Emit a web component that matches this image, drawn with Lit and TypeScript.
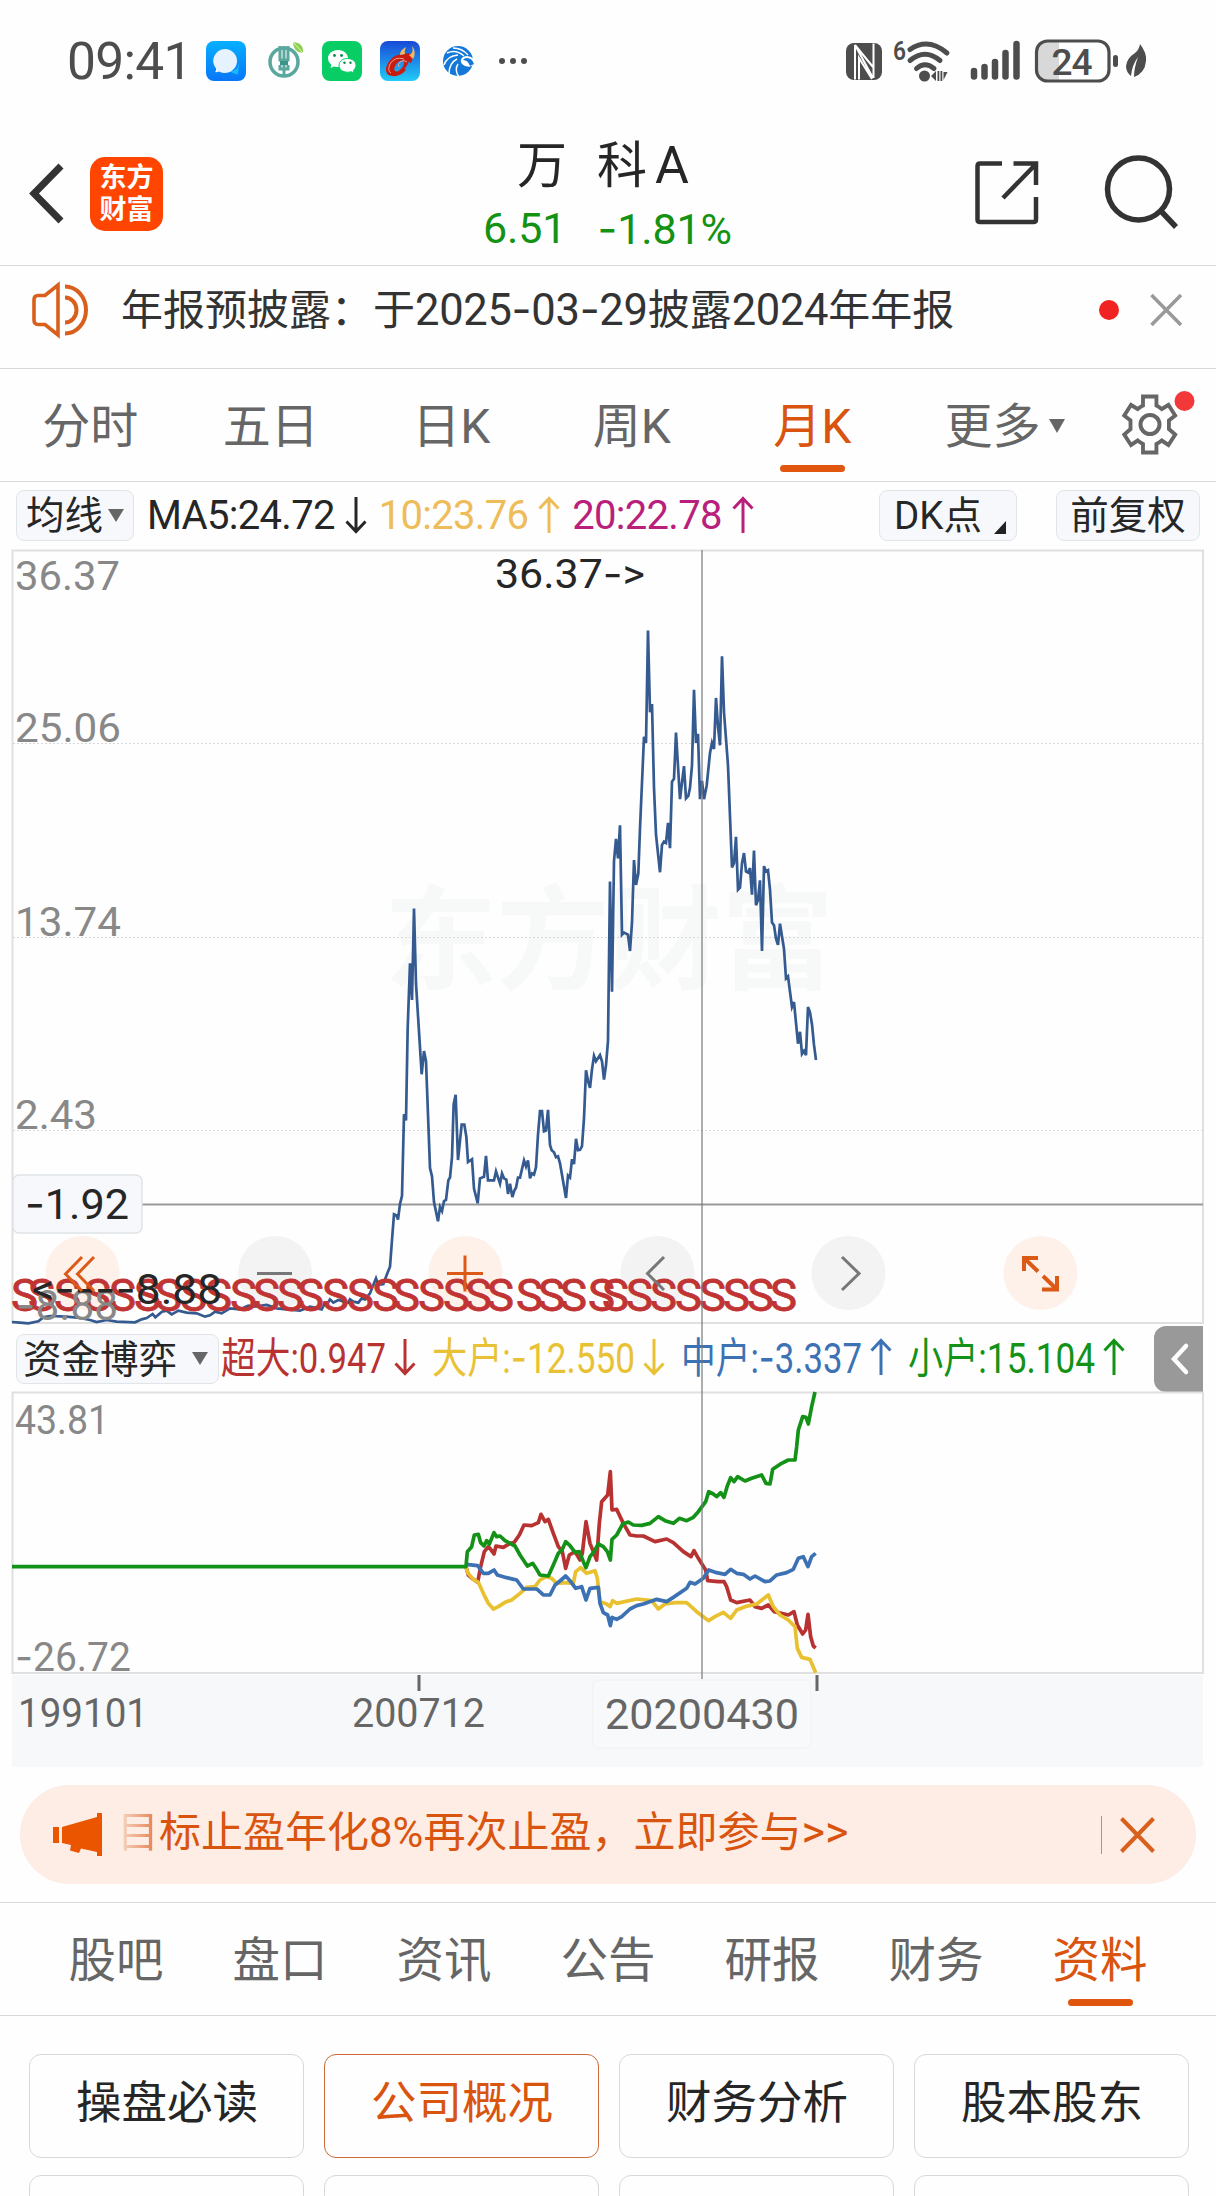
import { LitElement, html, svg, css } from "lit";
import { customElement } from "lit/decorators.js";

const PRICE_EARLY =
  "36,486 60,488 85,490 115,484 130,472 150,468 200,470 240,474 270,480 290,486 320,480 350,485 405,487 425,478 440,474 458,462 466,472 486,455 500,452 515,463 535,452 560,458 590,460 615,470 630,466 645,455 665,460 690,445 720,448 745,437 760,440 800,435 830,445 860,448 900,452 930,440 965,448 975,428 982,432 990,418 1000,428 1015,420 1030,424 1045,428 1050,418 1060,425 1075,428 1085,415 1095,418 1110,400 1120,375 1128,355 1135,375 1150,372 1160,345 1170,320 1176,240";
const PRICE_MAIN =
  "66,1568 72,1505 80,1508 84,1518 90,1480 96,1460 102,1260 108,1275 113,1050 120,890 126,980 132,756 138,940 155,1162 162,1105 168,1130 180,1392 186,1412 192,1475 204,1522 210,1487 216,1497 222,1473 228,1470 235,1422 240,1415 246,1365 251,1235 257,1212 264,1372 275,1285 283,1285 289,1315 294,1377 306,1370 312,1442 323,1478 330,1417 342,1413 348,1362 354,1422 372,1422 378,1400 390,1430 396,1405 402,1417 409,1420 414,1455 420,1430 427,1463 433,1447 438,1440 444,1415 450,1415 462,1373 468,1388 474,1373 480,1417 486,1405 492,1408 498,1390 504,1310 510,1252 516,1252 522,1302 528,1300 534,1249 540,1335 545,1348 552,1353 558,1365 564,1363 570,1380 588,1465 594,1410 600,1415 606,1370 612,1382 618,1320 624,1348 630,1347 636,1338 642,1270 648,1152 654,1178 660,1195 666,1150 672,1117 678,1130 690,1115 696,1130 702,1175 708,1140 714,1080 720,690 726,960 732,640 738,585 744,633 750,552 756,820 762,815 774,820 780,860 786,790 792,637 798,698 805,670 810,560 822,335 828,350 834,75 840,275 846,255 852,460 858,575 870,667 876,600 882,592 888,595 894,546 900,608 906,445 912,438 918,325 930,488 942,407 948,486 955,480 960,460 966,405 972,220 978,350 984,328 990,488 996,443 1002,488 1010,455 1020,375 1026,350 1032,365 1038,240 1044,310 1050,356 1056,138 1062,275 1074,405 1086,655 1092,645 1098,580 1104,710 1110,705 1116,645 1122,620 1128,665 1134,668 1140,657 1146,722 1152,614 1158,748 1164,735 1170,687 1176,860 1182,652 1188,665 1194,662 1200,710 1206,790 1212,797 1218,830 1224,845 1230,793 1242,855 1248,927 1254,922 1266,997 1272,985 1284,1087 1290,1058 1296,1112 1302,1105 1308,1115 1314,997 1320,1010 1326,1040 1332,1090 1338,1127";
const FLOWS: [string, string][] = [
  ["#b83232", "78,560 85,585 100,598 113,607 122,560 133,515 145,500 152,508 162,522 168,498 190,502 210,490 222,488 238,465 252,435 275,437 295,428 303,403 315,425 325,418 340,460 355,500 367,515 377,565 388,525 405,515 420,540 427,520 438,425 450,490 462,520 470,540 478,430 485,365 503,345 511,275 516,390 530,388 550,430 570,465 590,468 610,468 645,485 680,477 700,488 730,515 753,530 762,512 775,535 797,570 803,602 835,605 852,605 860,620 872,660 890,668 930,660 945,680 965,685 985,675 1003,695 1045,705 1062,695 1072,735 1088,762 1097,750 1104,703 1112,770 1120,798 1127,804"],
  ["#e8c030", "78,560 83,578 100,598 115,607 130,640 145,670 160,687 175,680 195,667 215,660 240,640 260,622 285,620 300,600 318,590 335,595 350,610 375,608 400,610 407,575 422,563 440,580 455,575 465,572 472,595 480,665 500,672 510,680 518,662 530,670 590,657 635,662 655,687 675,672 705,668 740,668 770,695 806,722 825,710 850,697 872,715 890,690 915,680 950,672 985,645 1000,680 1020,705 1045,720 1065,740 1072,805 1085,832 1110,838 1127,878"],
  ["#3c72b4", "78,553 113,557 130,580 145,580 162,570 172,585 200,593 230,600 250,627 290,627 310,645 330,645 345,615 360,603 377,588 390,602 407,625 425,620 438,660 450,625 475,622 480,670 490,698 503,705 511,737 516,712 530,718 545,710 570,687 590,677 610,672 650,658 680,665 700,652 740,625 750,607 765,612 790,595 806,570 830,578 855,583 872,568 890,580 910,583 930,597 945,588 975,605 990,603 1010,585 1040,578 1060,568 1075,535 1090,530 1104,560 1115,530 1127,520"],
  ["#149218", "-1284,560 78,560 82,515 95,500 103,465 115,463 122,488 132,498 140,482 148,492 155,475 162,458 170,470 180,468 195,482 210,490 225,498 240,525 262,558 278,550 290,568 300,585 325,588 340,555 355,520 367,508 377,485 390,497 405,517 418,515 430,545 438,563 450,530 462,515 475,492 490,500 502,515 511,540 516,478 530,465 548,432 565,426 580,435 605,436 630,430 655,410 675,422 700,430 718,415 740,422 760,412 775,395 797,365 806,335 820,342 830,350 842,338 852,352 862,318 872,293 882,305 893,290 915,303 935,295 965,285 978,310 990,312 998,268 1025,250 1045,240 1065,240 1070,200 1075,150 1088,110 1098,112 1105,132 1115,80 1125,36"],
];
const SELL_MARKS = [13, 30, 56, 86, 111, 136, 157, 182, 207, 232, 255, 279, 299, 324, 349, 374, 395, 420, 445, 467, 489, 518, 540, 562, 590, 604, 628, 652, 677, 701, 725, 749, 772];

/* Hyphens use the wider dash of a second family. */
const dash = (s: string) =>
  s.split("-").map((p, i) => (i ? html`<span class="hy">-</span>${p}` : html`${p}`));
const sdash = (s: string) =>
  s.split("-").map((p, i) => (i ? svg`<tspan class="hy">-</tspan>${p}` : svg`${p}`));
const label = (x: number, y: number, w: number, s: string, cls = "", size = 40) =>
  svg`<text class=${cls} x=${x} y=${y} font-size=${size} textLength=${w} lengthAdjust="spacingAndGlyphs">${sdash(s)}</text>`;

const arrow = (down: boolean) => html`<svg class="arrow" width="22" height="38" viewBox="0 0 22 38">
  <path d=${down ? "M11 1V35M1.5 25.5L11 35.5L20.500 25.5" : "M11 37V3M1.500 12.500L11 2.500L20.500 12.500"} fill="none" stroke="currentColor" stroke-width="3" /></svg>`;
const legend = (s: string, w: number, down: boolean, cls: string) => html`<span class="leg ${cls}">
  <svg width=${w} height="56" viewBox="0 0 ${w} 56">${label(0, 42, w, s, "", 42)}</svg>${arrow(down)}</span>`;

const appIcons = [
  html`<svg width="40" height="40" viewBox="0 0 40 40"><defs><linearGradient id="a" x2="0" y2="1"><stop stop-color="#06b0ff"/><stop offset="1" stop-color="#0876f8"/></linearGradient></defs><rect width="40" height="40" rx="8" fill="url(#a)"/><path d="M24 30q8 0 9-8l-1 11q-4 1-8-3z" fill="#18b8fc"/><path d="M19 8a12.500 12 0 1 1-1 24q-3-.3-5-1.500q-2 1-4 .5q1.500-1.500 1-3.500A12.500 12 0 0 1 19 8z" fill="#e6f3ff"/></svg>`,
  html`<svg width="40" height="40" viewBox="0 0 40 40"><circle cx="20" cy="21" r="14" fill="none" stroke="#5aa79d" stroke-width="3.500"/><path d="M16 5v14h8V5M20 5v11M16 24v4h8v-4M20 16v19" fill="none" stroke="#5aa79d" stroke-width="3"/><path d="M16 20h8v4h-8z" fill="#3b9488"/><path d="M29 1q11 1 10 11q-10-1-10-11z" fill="#8bd04e"/><path d="M29 1l10 11" stroke="#e6f6c8" stroke-width="1"/></svg>`,
  html`<svg width="40" height="40" viewBox="0 0 40 40"><rect width="40" height="40" rx="8" fill="#08cc64"/><path d="M16 9c6 0 10 4 10 8.500S22 26 16 26q-2 0-4-.6L8.500 27l.8-3.300C7.500 22 6 20 6 17.500C6 13 10 9 16 9z" fill="#fff"/><path d="M25.500 17.500c5 0 8.500 3 8.500 6.800c0 2-1 3.700-2.500 5l.6 2.700-3-1.300q-1.700.5-3.600.5c-5 0-8.500-3-8.500-6.900s3.500-6.800 8.500-6.800z" fill="#fff" stroke="#08cc64" stroke-width="1"/><circle cx="12.500" cy="14.500" r="1.400" fill="#078c45"/><circle cx="19.500" cy="14.500" r="1.400" fill="#078c45"/><circle cx="22.500" cy="21.800" r="1.200" fill="#078c45"/><circle cx="28.500" cy="21.800" r="1.200" fill="#078c45"/></svg>`,
  html`<svg width="40" height="40" viewBox="0 0 40 40"><defs><linearGradient id="b" x2="0" y2="1"><stop stop-color="#1848d8"/><stop offset="1" stop-color="#22ccf8"/></linearGradient></defs><rect width="40" height="40" rx="8" fill="url(#b)"/><path d="M22 14q5-3 9-1q3 3 0 9l-4-2q-5-3-10 2q-4 5-2 8q4 2 9-3l2 2q-6 7-14 6q-7-1-6-8q2-8 9-12q4-2 7-1z" fill="#c81c10"/><path d="M26 15q5 5 0 11q-4 5-9 5q8-5 7-11z" fill="#c81c10"/><path d="M24 18q-9-3-14 5q-3 7 1 9M27 21q-3-3-7 0q-3 3-1 5" fill="none" stroke="#f0a090" stroke-width="1"/><path d="M20 14q0-5 6-8q-2 4-1 7zM29 14q5-1 3-9q5 6 1 13z" fill="#f4b860"/></svg>`,
  html`<svg width="40" height="40" viewBox="0 0 40 40"><circle cx="20" cy="20" r="15" fill="#1478d8"/><path d="M36 18q-6-5-11-2q-4 3-1 7q4 4 10 2l3-3z" fill="#fff"/><path d="M36 23q-2-6-7-6q-3 0-4 2q5 0 7 6z" fill="#1478d8"/><path d="M9 12q9-4 17 3M6 24q3-9 14-10M11 33q0-11 8-15M21 36q-5-7-1-13M15 7q9 0 15 7" fill="none" stroke="#fff" stroke-width="1.400"/></svg>`,
  html`<svg width="40" height="40" viewBox="0 0 40 40" fill="#4d4d4d"><circle cx="6" cy="20" r="3"/><circle cx="17" cy="20" r="3"/><circle cx="28" cy="20" r="3"/></svg>`,
];

const PAD_X = [82.5, 275, 465.5, 657.5, 848.5, 1040.5];
const padCircles = () =>
  PAD_X.map((x, i) => svg`<circle class=${i % 5 === 0 || i === 2 ? "wbg" : "cbg"} cx=${x} cy="1273" r="37"/>`);

@customElement("app-root")
export class AppRoot extends LitElement {
  static styles = css`
    :host { display: block; width: 1216px; height: 2196px; overflow: hidden; background: #fefefe; color: #262626;
      font-family: Roboto, "Noto Sans CJK SC", sans-serif; }
    * { box-sizing: border-box; }
    svg { display: block; flex: none; overflow: visible; }
    .hy { font-family: Inter, sans-serif; }
    .status { height: 122px; padding: 0 70px 0 67px; display: flex; align-items: center; color: #4d4d4d; }
    .time { width: 139px; font-size: 51.500px; line-height: 60px; letter-spacing: -.7px; padding-top: 2px; }
    .apps { display: flex; gap: 18px; }
    .sys { margin-left: auto; display: flex; align-items: center; }
    .wifi { margin-left: 11px; } .signal { margin-left: 16px; } .battery { margin-left: 14px; } .leaf { margin-left: 7px; }
    .head { height: 144px; border-bottom: 1px solid #d5d9d9; display: grid; grid-template-columns: 29px 34px 27px 73px 1fr 63px 67px 72px 39px; align-items: center; }
    .back { grid-column: 2; } .share { grid-column: 6; } .search { grid-column: 8; }
    .brand { grid-column: 4; height: 74px; border-radius: 15px; background: #ff4500; color: #fff; font: 700 27px/32px "Noto Sans CJK SC", sans-serif; text-align: center; padding-top: 3px; }
    .title { grid-column: 5; padding-left: 320px; align-self: start; display: flex; flex-direction: column; }
    .name { font-size: 50px; line-height: 60px; padding: 14px 0 0 34px; display: flex; white-space: nowrap; }
    .name span { margin-right: 30px; }
    .name .k { margin-right: 8px; }
    .name .a { margin: 0; font-size: 52px; }
    .quote { font-size: 43px; line-height: 50px; color: #149214; display: flex; gap: 31px; letter-spacing: -.100px; margin-top: 7px; }
    .notice { height: 103px; border-bottom: 1px solid #d5d9d9; display: flex; align-items: center; padding: 0 33px 14px 32px; color: #333; font-size: 42px; }
    .notice p { margin: 0 0 0 34px; line-height: 60px; white-space: nowrap; flex: 1; }
    .notice .d { font-size: 43.500px; letter-spacing: -.300px; }
    .pip { width: 20px; height: 20px; border-radius: 50%; background: #f02222; }
    .x { margin-left: 31px; }
    .tabs { height: 113px; border-bottom: 1px solid #d5d9d9; display: grid; grid-template-columns: repeat(5, 180.500px) 207.500px 1fr; font-size: 48px; line-height: 56px; color: #666; }
    .tab { display: flex; flex-direction: column; align-items: center; padding-top: 30px; }
    .tab.more { flex-direction: row; align-items: flex-start; padding-left: 42px; gap: 8px; }
    .more svg { margin-top: 20px; }
    .tab.on { color: #d9540f; }
    .on::after { content: ""; width: 65px; height: 7px; border-radius: 4px; background: #e0560e; margin-top: 10px; }
    .gear { margin-top: 22px; margin-left: 8px; }
    .ma { height: 68px; display: flex; align-items: flex-start; padding: 8px 16px 0; font-size: 40px; line-height: 48px; white-space: nowrap; }
    .btn { height: 51px; border: 1.500px solid #e2e5e8; border-radius: 8px; background: #f6f8fb; display: flex; align-items: center; font-size: 38.500px; flex: none; }
    .btn.avg { width: 118px; padding-left: 9px; gap: 5px; }
    .btn.dk { width: 138px; padding-left: 14px; gap: 12px; margin-left: auto; }
    .btn.dk svg { margin-top: 24px; }
    .btn.fq { width: 144px; justify-content: center; margin-left: 39px; }
    .avgs { display: flex; margin-left: 13px; padding-top: 2px; letter-spacing: -.700px; }
    .avgs > span { display: flex; align-items: center; gap: 10px; }
    .avgs svg { margin-top: -3px; }
    .c10 { color: #eebc58; margin-left: 12px; } .c20 { color: #b8207c; margin-left: 12px; }
    .chart { position: relative; padding-left: 12px; width: 1216px; }
    .axislab { fill: #888; }
    .dark { fill: #262626; }
    .wm { fill: #f7f8f8; font: 700 113px "Noto Sans CJK SC", sans-serif; }
    .grid { stroke: #d8d8d8; stroke-width: 1; stroke-dasharray: 2 2; }
    .frame { fill: none; stroke: #e0e0e0; stroke-width: 2; }
    .price { fill: none; stroke: #345a90; stroke-width: 2.700; vector-effect: non-scaling-stroke; }
    .flow { fill: none; stroke-width: 3.700; vector-effect: non-scaling-stroke; stroke-linejoin: round; }
    .sell { fill: #c03434; stroke: #c03434; stroke-width: .8; }
    .warm { stroke: #dc5a18; } .cool { stroke: #777; }
    .warm, .cool { fill: none; stroke-width: 3; }
    .thick { stroke-width: 4; }
    .wbg { fill: #fef1ea; } .cbg { fill: #f3f3f3; }
    .legend { display: flex; height: 67px; align-items: center; }
    .btn.cap { width: 203px; height: 50px; margin-left: 4px; padding: 0 0 5px 6px; gap: 15px; font-size: 38.500px; }
    .cap svg { margin-top: 5px; }
    .leg { display: flex; align-items: center; gap: 8px; }
    .leg text { fill: currentColor; }
    .leg .arrow { margin-top: -4px; }
    .r { color: #b83232; margin-left: 2px; } .y { color: #e8c234; margin-left: 16px; } .b { color: #3c72b4; margin-left: 16px; } .g { color: #149218; margin-left: 16px; }
    .drawer { margin-left: auto; margin-right: 13px; width: 49px; height: 66px; background: #999; border-radius: 12px 0 0 12px; display: grid; place-items: center; }
    .axis { width: 1191px; height: 92px; background: #f7f8fa; margin-top: 1px; }
    .axis text { fill: #666; }
    .tip { fill: #f8f9fb; stroke: #f0f1f3; }
    .cross { position: absolute; left: 701px; top: 0; width: 2px; height: 1129px; background: rgba(120,120,120,.6); }
    .promo { margin: 18px 20px 18px; height: 99px; border-radius: 50px; background: #fdede4; color: #d9540f; display: flex; align-items: center; padding: 0 41px 0 33px; font-size: 42px; line-height: 60px; }
    .promo p { margin: 0 0 4px 14px; flex: 1; white-space: nowrap; }
    .gt { font-size: 45px; }
    .fade { background: linear-gradient(90deg, rgba(217,84,15,.1), rgba(217,84,15,.75)); -webkit-background-clip: text; background-clip: text; color: transparent; }
    .bar { width: 1.500px; height: 38px; background: #c98a64; margin-right: 18px; }
    .nav { height: 114px; border: solid #d5d9d9; border-width: 1px 0; padding: 0 34px; display: grid; grid-template-columns: repeat(7, 164px); font-size: 47.500px; line-height: 56px; color: #666; }
    .nav .tab { padding-top: 30px; }
    .cards { padding: 38px 27px 0 29px; display: grid; grid-template-columns: repeat(4, 275px); gap: 17px 20px; font-size: 45.500px; line-height: 60px; }
    .card { height: 104px; border: 1.500px solid #d5d9d9; border-radius: 12px; text-align: center; padding: 19px 0 0 1px; }
    .card.sel { border-color: #cd6a38; color: #d9540f; }
  `;

  render() {
    const tri = (w: number, h: number) => html`<svg width=${w} height=${h} viewBox="0 0 10 10" preserveAspectRatio="none"><path d="M0 0h10L5 10z" fill="#666"/></svg>`;
    return html`
      <div class="status">
        <div class="time">09:41</div>
        <div class="apps">${appIcons}</div>
        <div class="sys">
          <svg width="36" height="37" viewBox="0 0 36 37"><rect width="36" height="37" rx="8" fill="#4d4d4d"/><path d="M9 36.500V2L27 35M27.500 .5V35M13 36.500V15L26 36M9 2L27 24" fill="none" stroke="#fff" stroke-width="2"/></svg>
          <svg class="wifi" width="61" height="42" viewBox="0 0 61 42"><text x="0" y="20" font-size="26" font-weight="600" textLength="13" lengthAdjust="spacingAndGlyphs" fill="#4d4d4d">6</text><path d="M17 9.500Q35-3 54 13M17 20.500Q32 8 47 20.500M23.500 28.500Q32 21 41 28.500" fill="none" stroke="#4d4d4d" stroke-width="5" stroke-linecap="round"/><circle cx="31.500" cy="36" r="5.500" fill="#4d4d4d"/><path d="M38 36l5-5v10zM44.500 31h1.800v10h-1.800zM47.500 31h1.800v10h-1.800zM50.500 32h4l-4 8z" fill="#4d4d4d"/></svg>
          <svg class="signal" width="51" height="42" viewBox="0 0 51 42"><path d="M4 31V36.500M14.500 27V36.500M25 22V36.500M35.500 13V36.500M46.500 4V36.500" stroke="#4d4d4d" stroke-width="6.500" stroke-linecap="round"/></svg>
          <svg class="battery" width="84" height="44" viewBox="0 0 84 44"><path d="M11 3H24V41H11Q2 41 2 32V12Q2 3 11 3z" fill="#d8d8d8"/><rect x="1.500" y="2" width="72.500" height="40" rx="11" fill="none" stroke="#4d4d4d" stroke-width="3.200"/><rect x="78" y="16" width="5" height="12" rx="2.500" fill="#4d4d4d"/><text x="16.500" y="35.500" font-size="37" font-weight="500" textLength="41" fill="#4d4d4d">24</text></svg>
          <svg class="leaf" width="20" height="34" viewBox="0 0 20 34"><path d="M14 0Q21 9 20 17Q19 29 8 33Q8 24 12 13Q6 21 5 32Q0 28 0 22Q1 14 9 9Q13 6 14 0z" fill="#4d4d4d"/></svg>
        </div>
      </div>
      <header class="head">
        <svg class="back" width="34" height="60" viewBox="0 0 34 60"><path d="M32 2L5 29.500L32 57" fill="none" stroke="#333" stroke-width="7"/></svg>
        <div class="brand">东方<br>财富</div>
        <div class="title">
          <div class="name"><span>万</span><span class="k">科</span><span class="a">A</span></div>
          <div class="quote"><span>6.51</span><span>${dash("-1.81%")}</span></div>
        </div>
        <svg class="share" width="64" height="64" viewBox="0 0 64 64"><path d="M27 1.500H5Q2.500 1.500 2.500 4V57.500Q2.500 60 5 60H58.500Q61 60 61 57.500V35M38.500 1.500H61V23M61 2L28 36" fill="none" stroke="#333" stroke-width="4.500"/></svg>
        <svg class="search" width="74" height="76" viewBox="0 0 74 76"><circle cx="33.500" cy="33" r="31" fill="none" stroke="#333" stroke-width="5.500"/><path d="M55 54L71 71" stroke="#333" stroke-width="5.500"/></svg>
      </header>
      <div class="notice">
        <svg width="55" height="54" viewBox="0 0 55 54"><path d="M26 2V52L13 41.500H6Q2 41.500 2 37V17Q2 12.500 6 12.500H13Z" fill="none" stroke="#d9601c" stroke-width="3.600"/><path d="M33 3.500A21 23.500 0 0 1 33 50.500M33 14.500A11.500 12.500 0 0 1 33 39.500" fill="none" stroke="#d9601c" stroke-width="4"/></svg>
        <p>年报预披露：于<span class="d">${dash("2025-03-29")}</span>披露<span class="d">2024</span>年年报</p>
        <i class="pip"></i>
        <svg class="x" width="33" height="34" viewBox="0 0 33 34"><path d="M1.500 2L31 32M31 2L1.500 32" stroke="#999" stroke-width="3.500"/></svg>
      </div>
      <nav class="tabs">
        ${["分时", "五日", "日K", "周K", "月K"].map((t) => html`<div class="tab ${t === "月K" ? "on" : ""}">${t}</div>`)}
        <div class="tab more">更多${tri(16, 14)}</div>
        <svg class="gear" width="68" height="72" viewBox="0 0 68 72"><g fill="none" stroke="#666" stroke-width="4"><path d="M25 16.500V7.500H39V16.500Q42 18 44.500 20L51.500 16L58.500 26.500L52 31.500V40L58.500 45.500L51.500 56L44.500 51.500Q42 53.500 39 55V63.500H25V55Q22 53.500 19.500 51.500L12.500 56L5.500 45.500L12 40V31.500L5.500 26.500L12.500 16L19.500 20Q22 18 25 16.500z" transform="translate(1 -2) scale(.96 1)"/><circle cx="32" cy="33.500" r="9.500"/></g><circle cx="66.500" cy="10" r="10" fill="#f23838"/></svg>
      </nav>
      <div class="ma">
        <div class="btn avg">均线${tri(16, 13)}</div>
        <div class="avgs">
          <span>MA5:24.72${arrow(true)}</span><span class="c10">10:23.76${arrow(false)}</span><span class="c20">20:22.78${arrow(false)}</span>
        </div>
        <div class="btn dk">DK点<svg width="12" height="13" viewBox="0 0 12 13"><path d="M12 0V13H0z" fill="#222"/></svg></div>
        <div class="btn fq">前复权</div>
      </div>
      <section class="chart">
        <svg width="1191" height="775" viewBox="12 550 1191 775">
          <text class="wm" x="384" y="980" textLength="450">东方财富</text>
          <rect class="frame" x="12.500" y="550.500" width="1190.500" height="772.500"/>
          <path class="grid" d="M13 743.500H1202M13 937.500H1202M13 1130.500H1202"/>
          <path d="M13 1204.500H1203" stroke="#999" stroke-width="2"/>
          ${padCircles()}
          <polyline class="price" points=${PRICE_EARLY} transform="translate(0 1160) scale(.33333)"/>
          <polyline class="price" points=${PRICE_MAIN} transform="translate(370 600) scale(.33333 .40816)"/>
          ${label(15, 590, 105, "36.37", "axislab")}${label(15, 742, 106, "25.06", "axislab")}${label(15, 936, 106, "13.74", "axislab")}${label(15, 1129, 82, "2.43", "axislab")}
          ${label(495, 588, 150, "36.37->", "dark", 40)}
          ${SELL_MARKS.map((x) => svg`<text class="sell" x=${x - 2} y="1310.500" font-size="43.500" textLength="27" lengthAdjust="spacingAndGlyphs">S</text>`)}
          ${label(16, 1320, 102, "-8.88", "axislab", 42)}
          ${label(32, 1304, 190, "<----8.88", "dark", 43)}
          <rect x="13" y="1175" width="129" height="58" rx="6" fill="#f6f8fb" stroke="#e0e3e6" stroke-width="1.500"/>
          ${label(25, 1219, 104, "-1.92", "dark", 43)}
          <path class="warm" d="M82 1257L65.500 1274L82 1291M94 1257L77.500 1274L94 1291M447 1273.500H483M465 1255.500V1291.500"/>
          <path class="cool" d="M257 1273.500H292M664 1257L647.500 1273.500L664 1290M842 1257L859 1273.500L842 1290"/>
          <path class="warm thick" d="M1024 1271V1258H1038M1024 1258L1038 1271.500M1057 1276V1289.500H1042M1057 1289.500L1043 1276"/>
        </svg>
        <div class="legend">
          <div class="btn cap">资金博弈${tri(16, 13)}</div>
          ${legend("超大:0.947", 165, true, "r")}${legend("大户:-12.550", 203, true, "y")}${legend("中户:-3.337", 181, false, "b")}${legend("小户:15.104", 187, false, "g")}
          <div class="drawer"><svg width="20" height="32" viewBox="0 0 20 32"><path d="M17 3L5 16L17 29" fill="none" stroke="#fff" stroke-width="4.500" stroke-linecap="round"/></svg></div>
        </div>
        <svg width="1191" height="282" viewBox="12 1392 1191 282">
          <rect class="frame" x="12.500" y="1392.500" width="1190.500" height="280.500"/>
          ${label(15, 1434, 94, "43.81", "axislab")}${label(15, 1671, 116, "-26.72", "axislab")}
          ${FLOWS.map(([c, p]) => svg`<polyline class="flow" stroke=${c} points=${p} transform="translate(440 1380) scale(.33333)"/>`)}
        </svg>
        <div class="axis"><svg width="1191" height="92" viewBox="12 1675 1191 92">
          <path d="M419 1675V1691M817 1675V1691" stroke="#666" stroke-width="3"/>
          <rect class="tip" x="593" y="1680" width="218" height="68" rx="6"/>
          ${label(18, 1727, 130, "199101")}${label(352, 1727, 133, "200712")}${label(605, 1729, 194, "20200430", "", 43)}
        </svg></div>
        <div class="cross"></div>
      </section>
      <div class="promo">
        <svg width="50" height="43" viewBox="0 0 50 43" fill="#ec5500"><path d="M0 14H6V30H0zM9 14L44 4V0H49V43H44V39L28 35.500L26 40L17 37.500L18 32L9 30z"/></svg>
        <p><span class="fade">目</span>标止盈年化8%再次止盈，立即参与<span class="gt">&gt;&gt;</span></p>
        <i class="bar"></i>
        <svg width="35" height="36" viewBox="0 0 35 36"><path d="M1.500 1.500L33.500 34.500M33.500 1.500L1.500 34.500" stroke="#d9601c" stroke-width="4"/></svg>
      </div>
      <nav class="nav">${["股吧", "盘口", "资讯", "公告", "研报", "财务", "资料"].map((t) => html`<div class="tab ${t === "资料" ? "on" : ""}">${t}</div>`)}</nav>
      <div class="cards">
        ${["操盘必读", "公司概况", "财务分析", "股本股东", "", "", "", ""].map((t, i) => html`<div class="card ${i === 1 ? "sel" : ""}">${t}</div>`)}
      </div>`;
  }
}
